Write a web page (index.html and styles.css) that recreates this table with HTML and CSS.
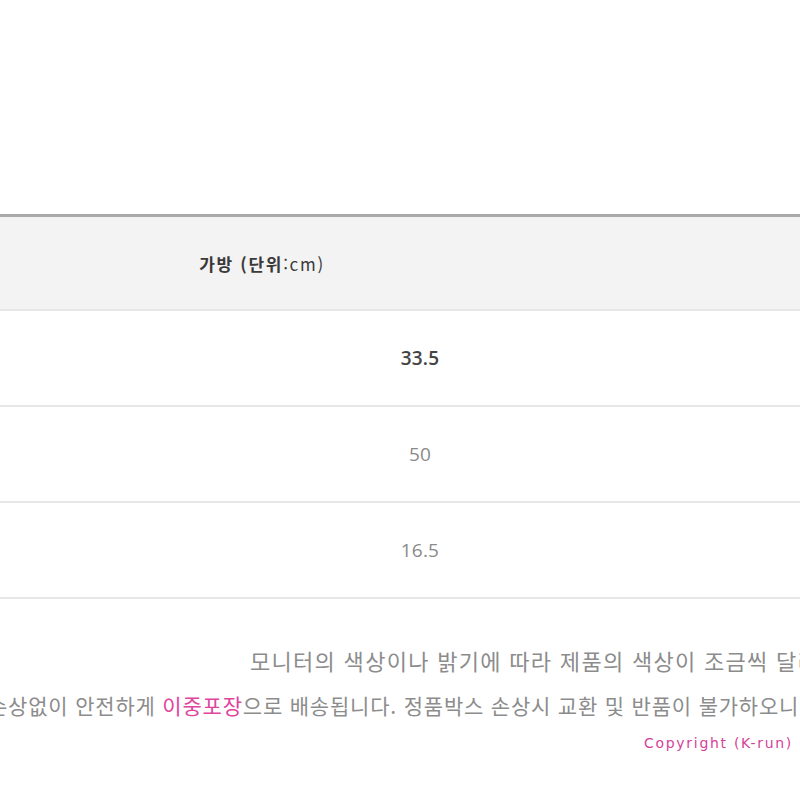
FILE: index.html
```html
<!DOCTYPE html>
<html lang="ko">
<head>
<meta charset="utf-8">
<link rel="stylesheet" href="styles.css">
</head>
<body>
<div class="page">
  <div class="size-table">
    <div class="row head">
      <div class="cell head-cell"><b>가방 (단위</b>:cm)</div>
    </div>
    <div class="row">
      <div class="cell val dark">33.5</div>
    </div>
    <div class="row">
      <div class="cell val">50</div>
    </div>
    <div class="row">
      <div class="cell val">16.5</div>
    </div>
  </div>
  <div class="notes">
    <p class="note note1">모니터의 색상이나 밝기에 따라 제품의 색상이 조금씩 달라 보일 수 있습니다.</p>
    <p class="note note2">손상없이 안전하게 <span class="pink">이중포장</span>으로 배송됩니다. 정품박스 손상시 교환 및 반품이 불가하오니 참고 부탁드립니다.</p>
    <p class="copy">Copyright (K-run)</p>
  </div>
</div>
</body>
</html>
```

FILE: styles.css
```css
html, body {
  margin: 0;
  padding: 0;
  background: #ffffff;
}
.page {
  width: 800px;
  height: 800px;
  overflow: hidden;
  padding-top: 214px;
  box-sizing: border-box;
  font-family: "Noto Sans CJK KR", "Noto Sans", sans-serif;
}
.size-table {
  border-top: 3px solid #a9a9a9;
}
.row {
  display: flex;
  height: 94px;
  border-bottom: 2px solid #e6e6e6;
  align-items: center;
}
.head {
  background: #f3f3f3;
  height: 92px;
}
.cell {
  flex: none;
  text-align: center;
}
.head-cell {
  width: 524px;
  font-size: 17px;
  color: #3a3a3a;
  letter-spacing: 1.7px;
  font-weight: 400;
}
.head-cell b {
  font-weight: 700;
}
.val {
  width: 840px;
  font-size: 19px;
  color: #8a8a8a;
  font-family: "Open Sans", "Noto Sans", sans-serif;
  letter-spacing: 0.2px;
}
.val.dark {
  color: #444;
  font-weight: 600;
}
.notes {
  padding-top: 39px;
}
.note {
  margin: 0;
  white-space: nowrap;
  color: #8c8c8c;
  line-height: 45px;
}
.note1 {
  padding-left: 250px;
  font-size: 22px;
  letter-spacing: 1.3px;
}
.note2 {
  margin-left: -12px;
  font-size: 21px;
  letter-spacing: 0.8px;
}
.pink {
  color: #e0449c;
}
.copy {
  margin: 0;
  text-align: right;
  padding-right: 7px;
  font-family: "DejaVu Sans", sans-serif;
  font-size: 14px;
  color: #d63f98;
  line-height: 30px;
  letter-spacing: 1.7px;
}
```
